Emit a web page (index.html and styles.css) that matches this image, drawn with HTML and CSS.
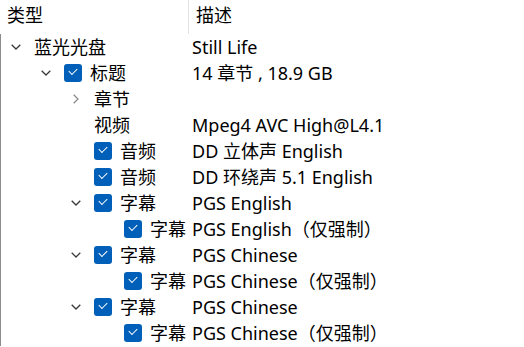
FILE: index.html
```html
<!DOCTYPE html>
<html lang="zh-CN">
<head>
    <meta charset="UTF-8">
    <title>光盘内容</title>
    <link rel="stylesheet" href="styles.css">
</head>
<body>
    <div class="tree">
        <div class="head">
            <div class="head-cell">类型</div>
            <div class="head-cell sep">描述</div>
        </div>
        <div class="rows">
            <div class="row lv0">
                <div class="name"><span class="exp"><svg width="10" height="6" viewBox="0 0 10 6"><path d="M0.7 0.7 L5 5 L9.3 0.7" /></svg></span><span class="label">蓝光光盘</span></div>
                <div class="desc">Still Life</div>
            </div>
            <div class="row lv1">
                <div class="name"><span class="exp"><svg width="10" height="6" viewBox="0 0 10 6"><path d="M0.7 0.7 L5 5 L9.3 0.7" /></svg></span><span class="check"></span><span class="label">标题</span></div>
                <div class="desc">14 章节 , 18.9 GB</div>
            </div>
            <div class="row lv2">
                <div class="name"><span class="exp closed"><svg width="6" height="10" viewBox="0 0 6 10"><path d="M0.7 0.7 L5 5 L0.7 9.3" /></svg></span><span class="label">章节</span></div>
                <div class="desc"></div>
            </div>
            <div class="row lv2">
                <div class="name"><span class="exp"></span><span class="label">视频</span></div>
                <div class="desc">Mpeg4 AVC High@L4.1</div>
            </div>
            <div class="row lv2">
                <div class="name"><span class="exp"></span><span class="check"></span><span class="label">音频</span></div>
                <div class="desc">DD 立体声 English</div>
            </div>
            <div class="row lv2">
                <div class="name"><span class="exp"></span><span class="check"></span><span class="label">音频</span></div>
                <div class="desc">DD 环绕声 5.1 English</div>
            </div>
            <div class="row lv2">
                <div class="name"><span class="exp"><svg width="10" height="6" viewBox="0 0 10 6"><path d="M0.7 0.7 L5 5 L9.3 0.7" /></svg></span><span class="check"></span><span class="label">字幕</span></div>
                <div class="desc">PGS English</div>
            </div>
            <div class="row lv3">
                <div class="name"><span class="exp"></span><span class="check"></span><span class="label">字幕</span></div>
                <div class="desc">PGS English（仅强制）</div>
            </div>
            <div class="row lv2">
                <div class="name"><span class="exp"><svg width="10" height="6" viewBox="0 0 10 6"><path d="M0.7 0.7 L5 5 L9.3 0.7" /></svg></span><span class="check"></span><span class="label">字幕</span></div>
                <div class="desc">PGS Chinese</div>
            </div>
            <div class="row lv3">
                <div class="name"><span class="exp"></span><span class="check"></span><span class="label">字幕</span></div>
                <div class="desc">PGS Chinese（仅强制）</div>
            </div>
            <div class="row lv2">
                <div class="name"><span class="exp"><svg width="10" height="6" viewBox="0 0 10 6"><path d="M0.7 0.7 L5 5 L9.3 0.7" /></svg></span><span class="check"></span><span class="label">字幕</span></div>
                <div class="desc">PGS Chinese</div>
            </div>
            <div class="row lv3">
                <div class="name"><span class="exp"></span><span class="check"></span><span class="label">字幕</span></div>
                <div class="desc">PGS Chinese（仅强制）</div>
            </div>
        </div>
    </div>
</body>
</html>
```

FILE: styles.css
```css
body {
    margin: 0;
    background: #fff;
    color: #000;
    font-family: "Noto Sans", "Noto Sans CJK SC", sans-serif;
    font-size: 18px;
    overflow: hidden;
}
.tree {
    width: 524px;
}
.head {
    display: grid;
    grid-template-columns: 188px 1fr;
    height: 34px;
}
.head-cell {
    padding: 3px 0 0 7px;
    line-height: 24px;
}
.head-cell.sep {
    border-left: 1px solid #e3e3e3;
}
.rows {
    border-left: 1px solid #8c8c8c;
}
.row {
    display: grid;
    grid-template-columns: 191px 1fr;
    height: 26px;
    align-items: center;
    white-space: nowrap;
}
.name {
    display: flex;
    align-items: center;
}
.lv1 .name { padding-left: 30px; }
.lv2 .name { padding-left: 60px; }
.lv3 .name { padding-left: 90px; }
.exp {
    width: 30px;
    height: 26px;
    margin-right: 3px;
    display: flex;
    align-items: center;
    justify-content: center;
}
.exp svg path {
    fill: none;
    stroke: #3a3a3a;
    stroke-width: 1.3;
}
.exp.closed svg path {
    stroke: #8a8a8a;
}
.check {
    width: 18px;
    height: 18px;
    border-radius: 3px;
    background: #005fb8;
    margin-right: 8px;
    position: relative;
}
.check::after {
    content: "";
    position: absolute;
    left: 5px;
    top: 4px;
    width: 7px;
    height: 4px;
    border-left: 1.2px solid #fff;
    border-bottom: 1.2px solid #fff;
    transform: rotate(-45deg);
}
.label {
    line-height: 26px;
}
.desc {
    line-height: 26px;
}
```
